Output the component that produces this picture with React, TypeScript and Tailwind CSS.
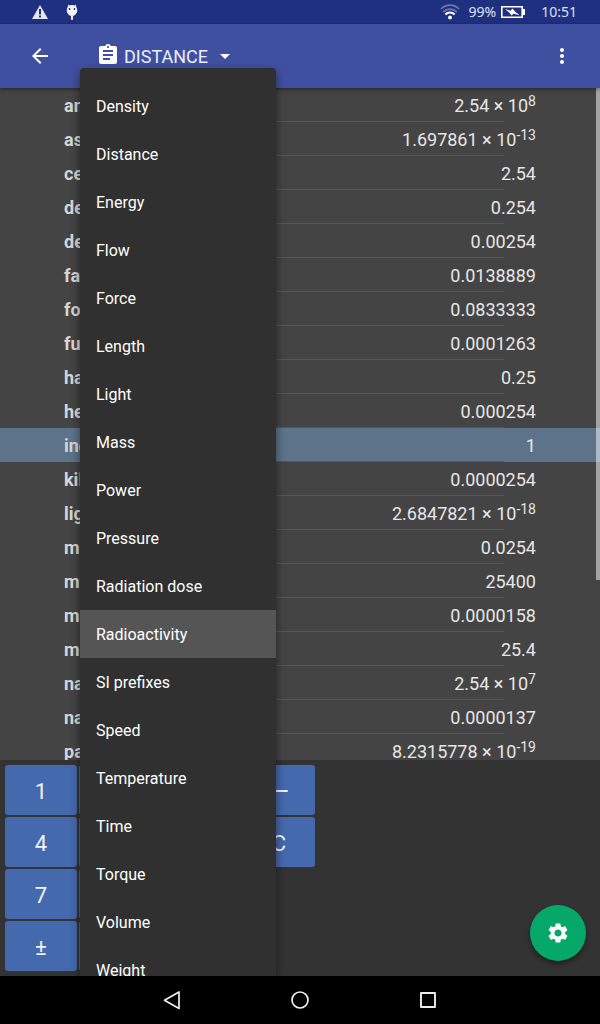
import { useState, type ReactNode } from "react";
import {
  MdArrowBack,
  MdArrowDropDown,
  MdAssignment,
  MdMoreVert,
  MdSettings,
} from "react-icons/md";

type Unit = { name: string; value: string; exponent?: string };

const units: Unit[] = [
  { name: "angstrom", value: "2.54 × 10", exponent: "8" },
  { name: "astronomical unit", value: "1.697861 × 10", exponent: "-13" },
  { name: "centimeter", value: "2.54" },
  { name: "decimeter", value: "0.254" },
  { name: "dekameter", value: "0.00254" },
  { name: "fathom", value: "0.0138889" },
  { name: "foot", value: "0.0833333" },
  { name: "furlong", value: "0.0001263" },
  { name: "hand", value: "0.25" },
  { name: "hectometer", value: "0.000254" },
  { name: "inch", value: "1" },
  { name: "kilometer", value: "0.0000254" },
  { name: "light year", value: "2.6847821 × 10", exponent: "-18" },
  { name: "meter", value: "0.0254" },
  { name: "micrometer", value: "25400" },
  { name: "mile", value: "0.0000158" },
  { name: "millimeter", value: "25.4" },
  { name: "nanometer", value: "2.54 × 10", exponent: "7" },
  { name: "nautical mile", value: "0.0000137" },
  { name: "parsec", value: "8.2315778 × 10", exponent: "-19" },
];

const categories = [
  "Density",
  "Distance",
  "Energy",
  "Flow",
  "Force",
  "Length",
  "Light",
  "Mass",
  "Power",
  "Pressure",
  "Radiation dose",
  "Radioactivity",
  "SI prefixes",
  "Speed",
  "Temperature",
  "Time",
  "Torque",
  "Volume",
  "Weight",
];

const digits = ["1", "2", "3", "4", "5", "6", "7", "8", "9", "±", "0", "."];

function StatusBar() {
  return (
    <div className="flex h-6 shrink-0 items-center justify-between bg-[#203080] pr-[23px] pl-8 font-['Noto_Sans','Open_Sans',sans-serif] text-sm text-[#dfe2f0]">
      <div className="flex items-center gap-4">
        <svg className="size-4" viewBox="0 0 16 16" aria-hidden="true">
          <path d="M8 1 16 15H0Z" fill="#e4e6f0" />
          <path d="M7 5h2v5.500H7zM7 11.500h2v2H7z" fill="#203080" />
        </svg>
        <svg className="size-4" viewBox="0 0 16 16" aria-hidden="true">
          <path
            d="M4.200.5 5.600 1.600a6 6 0 0 1 4.800 0L11.800.5l.5 2.400a5.200 5.200 0 0 1 1 3.100c0 3-2 5.500-4.300 6v3a1 1 0 0 1-2 0v-3C4.700 11.500 2.700 9 2.700 6a5.200 5.200 0 0 1 1-3.100Z"
            fill="#f4f5fa"
          />
          <circle cx="5.500" cy="5" r=".9" fill="#203080" />
          <circle cx="10.500" cy="5" r=".9" fill="#203080" />
        </svg>
      </div>
      <div className="flex items-center">
        <svg className="mr-[9px] h-4 w-5" viewBox="0 0 20 16" fill="none" aria-hidden="true">
          <path d="M1 5a12.500 12.500 0 0 1 18 0" stroke="#6b77ad" strokeWidth="1.600" />
          <path d="M3.200 8a9.600 9.600 0 0 1 13.600 0" stroke="#6b77ad" strokeWidth="1.800" />
          <path d="M5.400 10.500a6.500 6.500 0 0 1 9.200 0" stroke="#fff" strokeWidth="2" />
          <circle cx="10" cy="13.500" r="1.900" fill="#fff" />
        </svg>
        <span>99%</span>
        <svg className="mr-4 ml-[5px] h-3 w-6" viewBox="0 0 24 12" aria-hidden="true">
          <path d="M.8.8h20.400v10.400H.8z" fill="none" stroke="#fff" strokeWidth="1.600" />
          <path d="M22 3h2v6h-2z" fill="#fff" />
          <path d="m4 3 5.500 1.700L11.500 2.500l2.500 3 4.500 3.700-6-1.500-2 1.800-2.300-3Z" fill="#fff" />
        </svg>
        <span>10:51</span>
      </div>
    </div>
  );
}

function Key({ children }: { children: ReactNode }) {
  return (
    <button
      type="button"
      className="flex h-[50px] w-[72px] items-center justify-center rounded-[3px] bg-[#4569ad] pt-0.5 text-[22px] text-[#f0f2f7]"
    >
      {children}
    </button>
  );
}

export default function App() {
  const [selected, setSelected] = useState("inch");

  return (
    <div className="flex h-dvh flex-col bg-black font-[Roboto,sans-serif] text-white">
      <StatusBar />

      <div className="relative flex min-h-0 flex-1 flex-col">
        <header className="z-10 flex h-16 shrink-0 items-center bg-[#4050a0] px-[26px] shadow-[0_1px_4px_rgba(0,0,0,0.5)]">
          <button type="button" aria-label="Back" className="p-0.5">
            <MdArrowBack className="size-6" />
          </button>
          <button
            type="button"
            aria-haspopup="menu"
            aria-expanded="true"
            className="ml-[42px] flex items-center text-lg text-[#eceef6]"
          >
            <MdAssignment className="mr-1 mb-0.5 size-6 text-white" />
            <span className="pt-0.5">DISTANCE</span>
            <MdArrowDropDown className="ml-[5px] size-6 text-white" />
          </button>
          <button type="button" aria-label="More options" className="ml-auto">
            <MdMoreVert className="size-6" />
          </button>
        </header>

        <main className="relative min-h-0 flex-1 overflow-hidden bg-[#444]">
          <table className="w-full border-collapse text-lg leading-6 text-[#e6e6e6]">
            <tbody>
              {units.map((unit) => (
                <tr
                  key={unit.name}
                  onClick={() => setSelected(unit.name)}
                  className={
                    "relative h-[34px] after:absolute after:inset-x-24 after:bottom-0 after:h-px after:bg-[#575757] " +
                    (unit.name === selected ? "bg-[#5c738a]" : "")
                  }
                >
                  <th scope="row" className="p-0 pt-0.5 pl-16 text-left font-bold text-[#d6d6d6]">
                    {unit.name}
                  </th>
                  <td className="p-0 pt-0.5 pr-16 text-right">
                    {unit.value}
                    {unit.exponent && <sup className="-top-1.5 text-sm leading-none">{unit.exponent}</sup>}
                  </td>
                </tr>
              ))}
            </tbody>
          </table>
          <div className="absolute top-0 right-0 h-[492px] w-1 bg-white/50" />
        </main>

        <section aria-label="Keypad" className="relative flex shrink-0 gap-[18px] bg-[#333] p-[5px]">
          <div className="grid grid-cols-3 gap-0.5">
            {digits.map((digit) => (
              <Key key={digit}>{digit}</Key>
            ))}
          </div>
          <div className="flex flex-col gap-0.5">
            <Key>
              <span className="text-[26px]">—</span>
            </Key>
            <Key>C</Key>
          </div>
          <button
            type="button"
            aria-label="Settings"
            className="absolute right-3.5 bottom-[15px] flex size-14 items-center justify-center rounded-full bg-[#05a868] shadow-[0_3px_5px_rgba(0,0,0,0.4)]"
          >
            <MdSettings className="size-6" />
          </button>
        </section>

        <div className="absolute top-11 bottom-0 left-20 z-20 w-[196px] [clip-path:inset(-20px_-20px_0_-20px)]">
          <ul
            role="menu"
            className="h-full overflow-hidden rounded-t-sm bg-[#303030] pt-3.5 shadow-[0_4px_10px_rgba(0,0,0,0.5)]"
          >
            {categories.map((category) => (
              <li key={category} role="none">
                <button
                  type="button"
                  role="menuitem"
                  className={
                    "h-12 w-full px-4 pt-0.5 text-left text-base " +
                    (category === "Radioactivity" ? "bg-[#555]" : "")
                  }
                >
                  {category}
                </button>
              </li>
            ))}
          </ul>
        </div>
      </div>

      <nav className="flex h-12 shrink-0 items-center justify-center gap-[104px] bg-black">
        <button type="button" aria-label="Back">
          <svg className="size-6" viewBox="0 0 24 24" fill="none" stroke="#eee" strokeWidth="1.700" strokeLinejoin="round">
            <path d="M19 4v16.500L4.500 12.200Z" />
          </svg>
        </button>
        <button type="button" aria-label="Home">
          <svg className="size-6" viewBox="0 0 24 24" fill="none" stroke="#eee" strokeWidth="1.700">
            <circle cx="12" cy="12" r="8" />
          </svg>
        </button>
        <button type="button" aria-label="Recent apps">
          <svg className="size-6" viewBox="0 0 24 24" fill="none" stroke="#eee" strokeWidth="1.900" strokeLinejoin="round">
            <path d="M5 5h14v14H5z" />
          </svg>
        </button>
      </nav>
    </div>
  );
}
